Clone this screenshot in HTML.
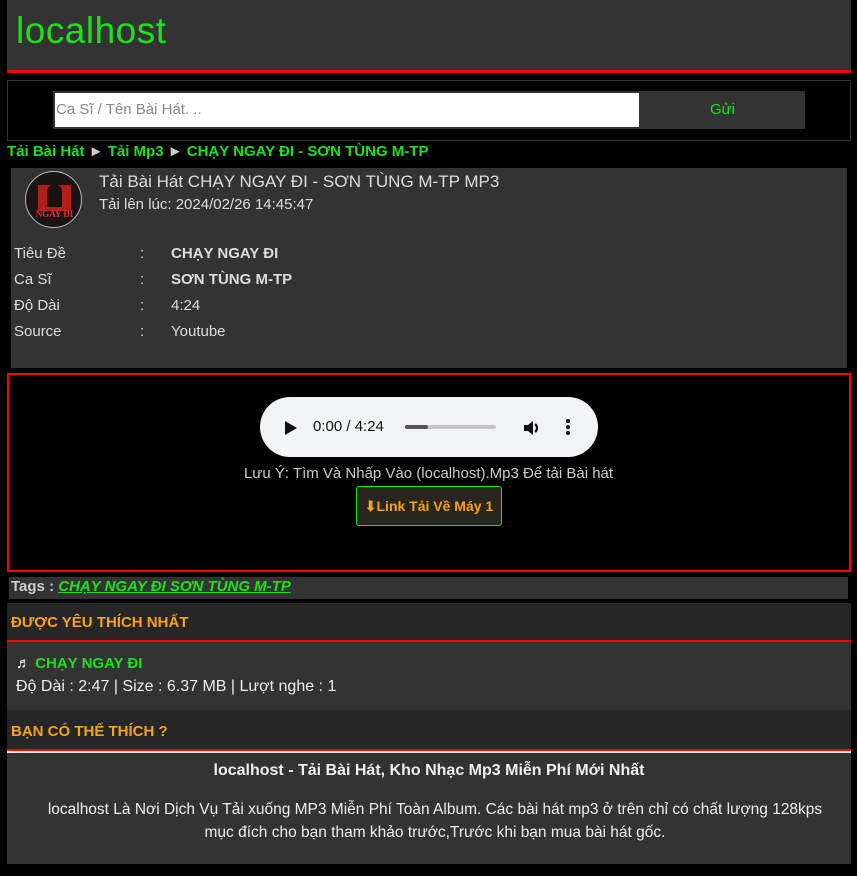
<!DOCTYPE html>
<html><head><meta charset="utf-8"><style>
*{margin:0;padding:0;box-sizing:border-box}
body{width:857px;height:876px;background:#000;font-family:"Liberation Sans",sans-serif;position:relative;overflow:hidden;color:#ddd}
.a{position:absolute;white-space:nowrap}
.g{color:#1be21b}
.o{color:#f7a21b;font-weight:bold;font-size:15px}
</style></head><body>
<div class="a" style="left:7px;top:0;width:844px;height:70px;background:#333"></div>
<div class="a" style="left:7px;top:70px;width:844px;height:3px;background:#f00"></div>
<div class="a g" style="left:16px;top:10px;font-size:37px;letter-spacing:0.5px">localhost</div>

<div class="a" style="left:7px;top:80px;width:844px;height:61px;border:1px solid #333"></div>
<div class="a" style="left:53px;top:91px;width:588px;height:38px;background:#fff;border:2px solid #333"></div>
<div class="a" style="left:56px;top:101px;font-size:15px;color:#888">Ca Sĩ / Tên Bài Hát. ..</div>
<div class="a" style="left:640px;top:91px;width:165px;height:38px;background:#333;text-align:center;line-height:38px;font-size:15px;color:#1be21b">Gửi</div>

<div class="a g" style="left:7px;top:143px;font-size:15px;font-weight:bold">Tải Bài Hát <span style="color:#ccc">►</span> Tải Mp3 <span style="color:#ccc">►</span> CHẠY NGAY ĐI - SƠN TÙNG M-TP</div>

<div class="a" style="left:11px;top:168px;width:836px;height:200px;background:#333"></div>
<div class="a" style="left:25px;top:171px;width:57px;height:57px;border-radius:50%;background:#1a1414;border:1px solid #bbb;overflow:hidden">
<div style="position:absolute;left:12px;top:13px;width:33px;height:26px;background:#b51d1d"></div>
<div style="position:absolute;left:21px;top:13px;width:15px;height:22px;background:#1a1010;border-radius:6px 6px 0 0"></div>
<div style="position:absolute;left:0;top:37px;width:57px;text-align:center;font-size:9px;font-family:'Liberation Serif',serif;color:#d33;font-weight:bold">NGAY ĐI</div>
</div>
<div class="a" style="left:99px;top:172px;font-size:17px;color:#ddd">Tải Bài Hát CHẠY NGAY ĐI - SƠN TÙNG M-TP MP3</div>
<div class="a" style="left:99px;top:196px;font-size:15px;color:#ddd">Tải lên lúc: 2024/02/26 14:45:47</div>

<div class="a" style="left:14px;top:241px;font-size:15px;line-height:26px;color:#ddd">Tiêu Đề<br>Ca Sĩ<br>Độ Dài<br>Source</div>
<div class="a" style="left:140px;top:241px;font-size:15px;line-height:26px;color:#ddd">:<br>:<br>:<br>:</div>
<div class="a" style="left:171px;top:241px;font-size:15px;line-height:26px;color:#ddd"><b>CHẠY NGAY ĐI</b><br><b>SƠN TÙNG M-TP</b><br>4:24<br>Youtube</div>

<div class="a" style="left:7px;top:373px;width:844px;height:199px;border:2px solid #f00"></div>
<div class="a" style="left:260px;top:397px;width:338px;height:60px;background:#f1f3f4;border-radius:30px"></div>
<svg class="a" style="left:284px;top:420px" width="14" height="16"><path d="M1 1L13 8L1 15Z" fill="#111"/></svg>
<div class="a" style="left:313px;top:418px;font-size:15px;color:#111">0:00 / 4:24</div>
<div class="a" style="left:405px;top:425px;width:91px;height:4px;background:#c4c4c4;border-radius:2px"></div>
<div class="a" style="left:405px;top:425px;width:23px;height:4px;background:#555;border-radius:2px"></div>
<svg class="a" style="left:522px;top:418px" width="20" height="20"><path d="M2 7h4l5-4v14l-5-4H2z" fill="#111"/><path d="M13 6a5 5 0 0 1 0 8" stroke="#111" stroke-width="2.2" fill="none"/></svg>
<div class="a" style="left:566px;top:419px;width:4px;height:4px;border-radius:2px;background:#111;box-shadow:0 6px 0 #111,0 12px 0 #111"></div>
<div class="a" style="left:0;width:857px;text-align:center;top:465px;font-size:15px;color:#ccc">Lưu Ý: Tìm Và Nhấp Vào (localhost).Mp3 Để tải Bài hát</div>
<div class="a" style="left:356px;top:486px;width:146px;height:40px;border:1px solid #1be21b;border-radius:3px;background:#2a2520;text-align:center;line-height:38px;font-size:14px;font-weight:bold;color:#f7a21b">⬇Link Tải Về Máy 1</div>

<div class="a" style="left:9px;top:577px;width:839px;height:22px;background:#333"></div>
<div class="a" style="left:11px;top:578px;font-size:15px;font-weight:bold;color:#ccc">Tags : <i style="color:#1be21b;text-decoration:underline">CHẠY NGAY ĐI SƠN TÙNG M-TP</i></div>

<div class="a" style="left:7px;top:603px;width:844px;height:37px;background:#262626"></div>
<div class="a o" style="left:11px;top:614px">ĐƯỢC YÊU THÍCH NHẤT</div>
<div class="a" style="left:7px;top:640px;width:844px;height:2px;background:#f00"></div>
<div class="a" style="left:7px;top:642px;width:844px;height:68px;background:#333"></div>
<div class="a" style="left:16px;top:655px;font-size:15px;font-weight:bold"><span style="color:#fff">♬</span> <span class="g">CHẠY NGAY ĐI</span></div>
<div class="a" style="left:16px;top:678px;font-size:16px;color:#eee">Độ Dài : 2:47 | Size : 6.37 MB | Lượt nghe : 1</div>

<div class="a" style="left:7px;top:710px;width:844px;height:39px;background:#262626"></div>
<div class="a o" style="left:11px;top:723px">BẠN CÓ THỂ THÍCH ?</div>
<div class="a" style="left:7px;top:749px;width:844px;height:2px;background:#f00"></div>
<div class="a" style="left:7px;top:751px;width:844px;height:2px;background:#eee"></div>
<div class="a" style="left:7px;top:753px;width:844px;height:111px;background:#333"></div>
<div class="a" style="left:7px;width:844px;text-align:center;top:762px;font-size:16px;font-weight:bold;color:#eee">localhost - Tải Bài Hát, Kho Nhạc Mp3 Miễn Phí Mới Nhất</div>
<div class="a" style="left:7px;width:844px;text-align:center;top:798px;font-size:15.5px;line-height:23px;color:#eee;white-space:normal;padding:0 8px 0 20px">localhost Là Nơi Dịch Vụ Tải xuống MP3 Miễn Phí Toàn Album. Các bài hát mp3 ở trên chỉ có chất lượng 128kps<br>mục đích cho bạn tham khảo trước,Trước khi bạn mua bài hát gốc.</div>
</body></html>
